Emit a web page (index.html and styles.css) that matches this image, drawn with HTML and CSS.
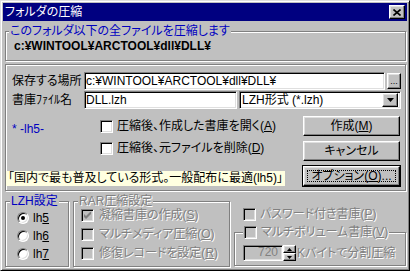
FILE: index.html
```html
<!DOCTYPE html>
<html lang="ja">
<head>
    <meta charset="UTF-8">
    <title>フォルダの圧縮</title>
    <link rel="stylesheet" href="styles.css">
</head>
<body>

<div class="window">
    <div class="titlebar">
        <span class="title">フォルダの圧縮</span>
        <span class="close"><svg width="8" height="7" viewBox="0 0 8 7"><path d="M0.5 0.5l7 6M7.5 0.5l-7 6" stroke="#000" stroke-width="1.6"/></svg></span>
    </div>

    <fieldset class="group src">
        <legend class="blue">このフォルダ以下の全ファイルを圧縮します</legend>
        <div class="path">c:¥WINTOOL¥ARCTOOL¥dll¥DLL¥</div>
    </fieldset>

    <div class="frame main">
        <div class="row">
            <span class="lbl">保存する場所</span>
            <span class="edit dir">c:¥WINTOOL¥ARCTOOL¥dll¥DLL¥</span>
            <span class="btn dots">...</span>
        </div>
        <div class="row second">
            <span class="lbl">書庫ﾌｧｲﾙ名</span>
            <span class="edit name">DLL.lzh</span>
            <span class="edit combo">
                <span class="combo-text">LZH形式 (*.lzh)</span>
                <span class="btn drop"><svg width="7" height="4" viewBox="0 0 7 4"><path d="M0 0h7L3.5 4z" fill="#000"/></svg></span>
            </span>
        </div>
        <div class="lower">
            <div class="left">
                <div class="opts">
                    <span class="tag blue">* -lh5-</span>
                    <div class="checks">
                        <div class="chk"><span class="box"></span><span>圧縮後、作成した書庫を開く(<u>A</u>)</span></div>
                        <div class="chk"><span class="box"></span><span>圧縮後、元ファイルを削除(<u>D</u>)</span></div>
                    </div>
                </div>
                <div class="hint">「国内で最も普及している形式。一般配布に最適(lh5)」</div>
            </div>
            <div class="buttons">
                <span class="btn push"><span>作成(<u>M</u>)</span></span>
                <span class="btn push"><span>キャンセル</span></span>
                <span class="btn push focused"><span class="ring">オプション(<u>O</u>)...</span></span>
            </div>
        </div>
    </div>

    <div class="bottom">
        <fieldset class="group lzh">
            <legend class="blue">LZH設定</legend>
            <div class="list">
                <div class="chk"><span class="radio on"></span><span>lh<u>5</u></span></div>
                <div class="chk"><span class="radio"></span><span>lh<u>6</u></span></div>
                <div class="chk"><span class="radio"></span><span>lh<u>7</u></span></div>
            </div>
        </fieldset>

        <fieldset class="group rar">
            <legend class="off">RAR圧縮設定</legend>
            <div class="list">
                <div class="chk off"><span class="box dim"><svg width="7" height="7" viewBox="0 0 7 7"><path d="M0 2l2 2 5-5v3l-5 5-2-2z" fill="#808080"/></svg></span><span>凝縮書庫の作成(<u>S</u>)</span></div>
                <div class="chk off"><span class="box dim"></span><span>マルチメディア圧縮(<u>O</u>)</span></div>
                <div class="chk off"><span class="box dim"></span><span>修復レコードを設定(<u>R</u>)</span></div>
            </div>
        </fieldset>

        <div class="extra">
            <div class="chk off pass"><span class="box dim"></span><span>パスワード付き書庫(<u>P</u>)</span></div>
            <fieldset class="group multi">
                <legend><span class="chk off"><span class="box dim"></span><span>マルチボリューム書庫(<u>V</u>)</span></span></legend>
                <div class="split">
                    <span class="edit size">720</span>
                    <span class="spin">
                        <span class="btn arrow"><svg width="5" height="3" viewBox="0 0 5 3"><path d="M0 3h5L2.5 0z" fill="#000"/></svg></span>
                        <span class="btn arrow"><svg width="5" height="3" viewBox="0 0 5 3"><path d="M0 0h5L2.5 3z" fill="#000"/></svg></span>
                    </span>
                    <span class="off">Kバイトで分割圧縮</span>
                </div>
            </fieldset>
        </div>
    </div>
</div>

</body>
</html>
```

FILE: styles.css
```css
* { box-sizing: border-box; }
body { margin: 0; background: #c0c0c0; font-family: "Liberation Sans", "Noto Sans CJK JP", sans-serif; font-size: 12px; line-height: 14px; color: #000; font-feature-settings: "palt"; }

.window { width: 410px; height: 271px; padding: 2px; background: #c0c0c0; border: 1px solid; border-color: #dfdfdf #000 #000 #dfdfdf; box-shadow: inset 1px 1px #fff, inset -1px -1px #808080; overflow: hidden; }
.titlebar { height: 18px; display: flex; align-items: center; justify-content: space-between; padding: 0 2px; background: #000080; color: #fff; }
.close { width: 16px; height: 14px; display: flex; align-items: center; justify-content: center; background: #c0c0c0; border: 1px solid; border-color: #fff #000 #000 #fff; box-shadow: inset -1px -1px #808080, inset 1px 1px #dfdfdf; }

.blue { color: #0000c0; }
.off { color: #808080; text-shadow: 1px 1px 0 #fff; }

/* etched group boxes */
.group, .frame { margin: 0; padding: 0; min-width: 0; border: 1px solid #808080; box-shadow: inset 1px 1px #fff, 1px 1px #fff; }
legend { padding: 0 1px; background: #c0c0c0; line-height: 14px; white-space: nowrap; }

.src { margin: 3px 1px 0 2px; padding: 1px 0 7px 3px; }
.path { padding-left: 5px; font-weight: bold; }

.main { margin: 3px 1px 0 2px; padding: 7px 0 4px 0; }
.row { display: flex; align-items: center; height: 18px; padding-left: 6px; }
.row.second { margin-top: 1px; }
.lbl { width: 72px; white-space: nowrap; }

.edit { height: 18px; padding: 1px 1px; background: #fff; border: 1px solid; border-color: #808080 #fff #fff #808080; box-shadow: inset 1px 1px #000, inset -1px -1px #dfdfdf; white-space: nowrap; overflow: hidden; }
.dir { width: 301px; }
.name { width: 153px; }
.combo { width: 162px; margin-left: 2px; display: flex; justify-content: space-between; padding: 1px 2px 1px 1px; }
.combo-text { padding-left: 1px; }

.btn { display: flex; align-items: center; justify-content: center; background: #c0c0c0; border: 1px solid; border-color: #fff #000 #000 #fff; box-shadow: inset -1px -1px #808080, inset 1px 1px #dfdfdf; white-space: nowrap; }
.dots { width: 14px; height: 16px; margin-left: 2px; font-size: 9px; line-height: 9px; align-items: flex-end; padding-bottom: 2px; }
.drop { width: 16px; height: 14px; }

.lower { display: flex; height: 70px; margin-top: 7px; }
.left { flex: 1; display: flex; flex-direction: column; }
.opts { display: flex; padding-left: 6px; }
.tag { width: 88px; margin-top: 6px; }
.checks { display: flex; flex-direction: column; gap: 8px; margin-top: 3px; }
.chk { display: flex; align-items: center; gap: 4px; height: 14px; white-space: nowrap; }
.box { width: 13px; height: 13px; flex: none; display: flex; align-items: center; justify-content: center; background: #fff; border: 1px solid; border-color: #808080 #fff #fff #808080; box-shadow: inset 1px 1px #000, inset -1px -1px #dfdfdf; }
.box.dim { background: #c0c0c0; }
.hint { margin-top: auto; align-self: flex-start; height: 15px; line-height: 15px; padding: 0 2px; background: #ffffe1; white-space: nowrap; }

.buttons { width: 97px; margin-right: 5px; display: flex; flex-direction: column; gap: 5px; }
.push { height: 20px; }
.focused { outline: 1px solid #000; padding: 3px; }
.ring { flex: 1; align-self: stretch; display: flex; align-items: center; justify-content: center; line-height: 12px; border: 1px dotted #000; }

.bottom { display: flex; gap: 4px; margin: 3px 1px 0 2px; }
.lzh { width: 64px; height: 73px; }
.lzh legend { margin-left: 4px; }
.lzh .list { display: flex; flex-direction: column; gap: 4px; margin-top: 3px; padding-left: 11px; }
.radio { width: 12px; height: 12px; flex: none; display: flex; align-items: center; justify-content: center; border-radius: 50%; background: #fff; border: 1px solid; border-color: #808080 #fff #fff #808080; box-shadow: inset 1px 1px #000, inset -1px -1px #dfdfdf; }
.radio.on::after { content: ""; width: 4px; height: 4px; border-radius: 50%; background: #000; }

.rar { width: 157px; height: 73px; }
.rar legend { margin-left: 4px; }
.rar .list { display: flex; flex-direction: column; gap: 5px; margin-top: 0; padding-left: 7px; }
.rar .chk { gap: 5px; }

.extra { width: 172px; }
.pass { margin: 13px 0 0 9px; }
.multi { height: 41px; margin-top: 4px; padding: 6px 0 0 8px; }
.multi legend { padding: 0 1px; }
.split { display: flex; align-items: center; height: 16px; }
.size { width: 40px; height: 16px; padding: 0 4px; line-height: 12px; text-align: right; background: #c0c0c0; color: #808080; }
.spin { width: 13px; height: 16px; display: flex; flex-direction: column; margin-right: 1px; }
.arrow { height: 8px; }
```
